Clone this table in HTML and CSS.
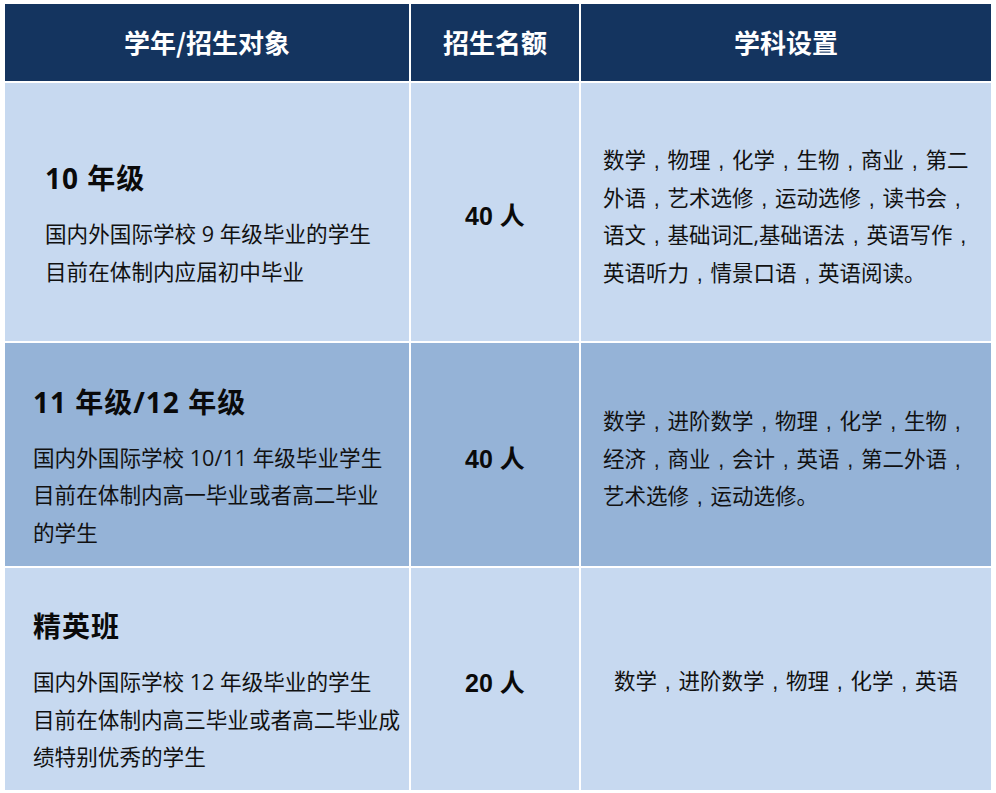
FILE: index.html
```html
<!DOCTYPE html>
<html lang="zh-CN">
<head>
<meta charset="utf-8">
<title>招生计划</title>
<link rel="stylesheet" href="styles.css">
</head>
<body>
<div class="table">
  <div class="cell head">学年/招生对象</div>
  <div class="cell head">招生名额</div>
  <div class="cell head">学科设置</div>

  <div class="cell grade light first">
    <div class="title">10 年级</div>
    <div class="desc">国内外国际学校 9 年级毕业的学生<br>目前在体制内应届初中毕业</div>
  </div>
  <div class="cell quota light">40 人</div>
  <div class="cell subjects light">
    <span>数学<i class="cm">,</i>物理<i class="cm">,</i>化学<i class="cm">,</i>生物<i class="cm">,</i>商业<i class="cm">,</i>第二</span>
    <span>外语<i class="cm">,</i>艺术选修<i class="cm">,</i>运动选修<i class="cm">,</i>读书会<i class="cm">,</i></span>
    <span>语文<i class="cm">,</i>基础词汇,基础语法<i class="cm">,</i>英语写作<i class="cm">,</i></span>
    <span>英语听力<i class="cm">,</i>情景口语<i class="cm">,</i>英语阅读。</span>
  </div>

  <div class="cell grade mid">
    <div class="title">11 年级/12 年级</div>
    <div class="desc">国内外国际学校 10/11 年级毕业学生<br>目前在体制内高一毕业或者高二毕业<br>的学生</div>
  </div>
  <div class="cell quota mid">40 人</div>
  <div class="cell subjects mid">
    <span>数学<i class="cm">,</i>进阶数学<i class="cm">,</i>物理<i class="cm">,</i>化学<i class="cm">,</i>生物<i class="cm">,</i></span>
    <span>经济<i class="cm">,</i>商业<i class="cm">,</i>会计<i class="cm">,</i>英语<i class="cm">,</i>第二外语<i class="cm">,</i></span>
    <span>艺术选修<i class="cm">,</i>运动选修。</span>
  </div>

  <div class="cell grade light">
    <div class="title">精英班</div>
    <div class="desc">国内外国际学校 12 年级毕业的学生<br>目前在体制内高三毕业或者高二毕业成<br>绩特别优秀的学生</div>
  </div>
  <div class="cell quota light">20 人</div>
  <div class="cell subjects light centered">
    <span>数学<i class="cm">,</i>进阶数学<i class="cm">,</i>物理<i class="cm">,</i>化学<i class="cm">,</i>英语</span>
  </div>
</div>
</body>
</html>
```
FILE: styles.css
```css
html, body {
  margin: 0;
  padding: 0;
  background: #ffffff;
}

body {
  font-family: "Open Sans", "Noto Sans CJK SC", sans-serif;
  color: #111111;
}

.table {
  display: grid;
  grid-template-columns: 404px 168px 410px;
  grid-template-rows: 77px 258px 223px 222px;
  gap: 2px;
  margin: 4px 0 0 5px;
  width: 986px;
  background: #ffffff;
}

.cell {
  display: flex;
  flex-direction: column;
  justify-content: center;
  box-sizing: border-box;
  white-space: nowrap;
}

.head {
  background: #14345f;
  color: #ffffff;
  font-family: "Noto Sans CJK SC", sans-serif;
  font-weight: 700;
  font-size: 26px;
  align-items: center;
  padding-bottom: 2px;
}

.light {
  background: #c7d9f0;
}

.mid {
  background: #95b3d7;
}

.grade {
  padding-left: 28px;
  padding-top: 24px;
}

.grade.first {
  padding-left: 40px;
}

.title {
  font-size: 28px;
  font-weight: 700;
  line-height: 40px;
  letter-spacing: 1px;
  margin-bottom: 17px;
  color: #0a0a0a;
}

.desc {
  font-size: 21.6px;
  line-height: 37.5px;
}

.quota {
  align-items: center;
  font-family: "Liberation Sans", "Noto Sans CJK SC", sans-serif;
  font-weight: 700;
  font-size: 25px;
  padding-top: 4px;
  color: #0a0a0a;
}

.subjects {
  padding-left: 22px;
  padding-top: 8px;
  font-size: 21.5px;
  line-height: 37.5px;
}

.subjects span {
  display: block;
  height: 37.5px;
}

.subjects.centered {
  padding-left: 0;
  align-items: center;
  padding-top: 4px;
}

.cm {
  display: inline-block;
  width: 1em;
  line-height: 1;
  text-align: center;
  font-style: normal;
  font-family: "Liberation Sans", sans-serif;
}
```
